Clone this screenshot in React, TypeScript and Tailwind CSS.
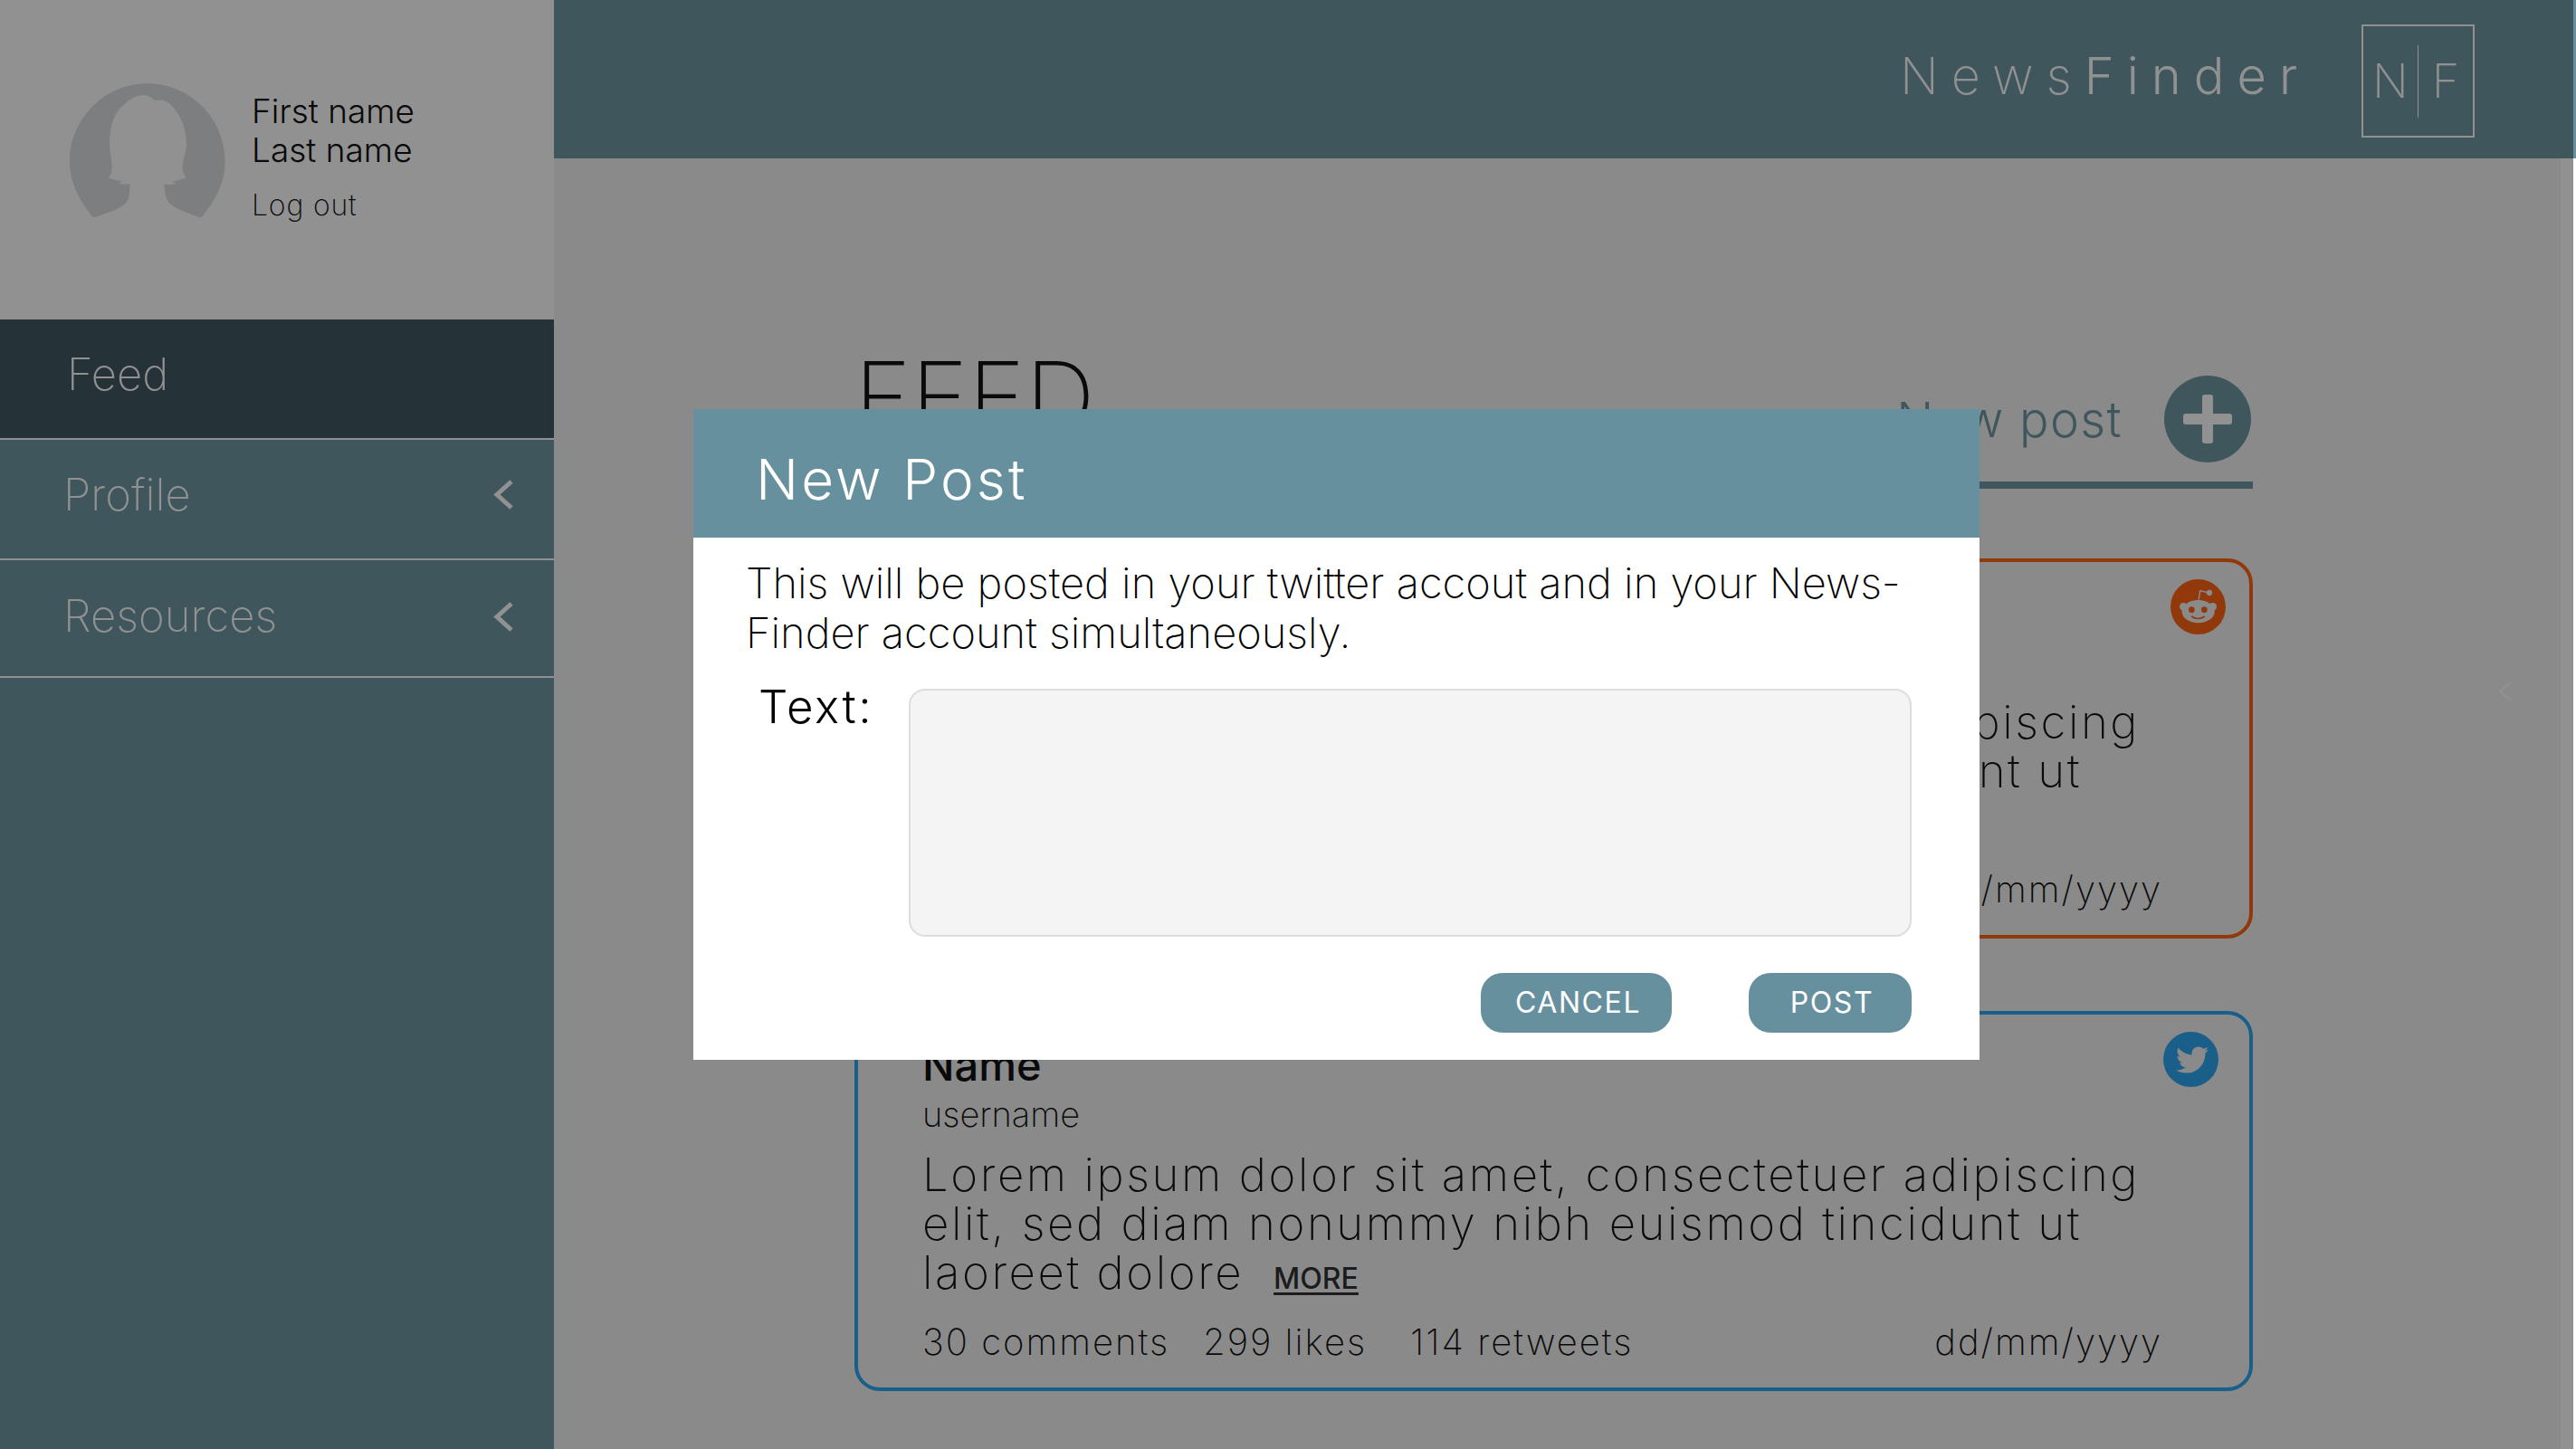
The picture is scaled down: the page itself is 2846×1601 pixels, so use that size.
import React from 'react';
import { FaTwitter } from 'react-icons/fa';

function Avatar() {
  return (
    <svg className="h-[149px] w-[172px] shrink-0 text-[#dadcdf]" viewBox="52 35 516 447" role="img" aria-label="Profile picture">
      <path
        fill="currentColor"
        d="M131 481 C92 434 52 370 52 295 C52 150 170 36 310 36 C450 36 567 150 567 295 C567 370 528 434 487 481
           C450 467 405 453 384 434 C369 420 367 392 365 369 Q384 373 403 368 L393 360 Q418 357 439 347
           C427 337 426 322 426 305 C429 283 439 262 439 233 C437 186 422 145 394 114 C376 91 355 87 334 93
           C322 78 306 74 291 75 C258 77 241 99 220 117 C193 146 185 190 184 236 C185 270 195 297 191 330
           Q188 341 179 347 Q200 357 224 360 L215 368 Q233 372 252 369 L249 407 Q247 427 228 441 C203 457 166 469 131 481 Z"
      />
    </svg>
  );
}

function Chevron({ className }: { className: string }) {
  return (
    <svg className={className} viewBox="0 0 22 33" fill="none" stroke="currentColor" aria-hidden="true">
      <path d="M20 2 L4 16.500 L20 31" strokeWidth="5" />
    </svg>
  );
}

function RedditBadge() {
  return (
    <svg className="absolute top-[19px] right-[26px] size-[61px]" viewBox="0 0 183 183" role="img" aria-label="Reddit">
      <circle cx="91.500" cy="91.500" r="91.500" fill="#ff5a02" />
      <g fill="#f2f2f2">
        <circle cx="43" cy="91" r="13" />
        <circle cx="140" cy="91" r="13" />
        <ellipse cx="92" cy="107" rx="54" ry="38" />
        <circle cx="129" cy="45" r="9.500" />
      </g>
      <path d="M93 71 L98 38 L126 45" fill="none" stroke="#f2f2f2" strokeWidth="4" />
      <circle cx="70" cy="101" r="10" fill="#ff5a02" />
      <circle cx="112" cy="101" r="10" fill="#ff5a02" />
      <path d="M69 123 Q91 138 114 123" fill="none" stroke="#ff5a02" strokeWidth="5" />
    </svg>
  );
}

function TwitterBadge() {
  return (
    <span className="absolute top-[19px] right-[34px] flex size-[61px] items-center justify-center rounded-full bg-[#1da1f2] pl-0.5 text-[#f2f2f2]">
      <FaTwitter size={36} title="Twitter" />
    </span>
  );
}

function Post({ border, badge, shares }: { border: string; badge: React.ReactNode; shares: string }) {
  return (
    <article className={`relative rounded-[28px] border-4 pt-7 pr-[96px] pb-6 pl-[71px] ${border}`}>
      {badge}
      <h2 className="text-[47px] leading-[56px] font-medium">Name</h2>
      <p className="text-[38px] leading-[52px] font-extralight">username</p>
      <p className="mt-3.5 text-[51px] leading-[54px] font-extralight tracking-wider">
        Lorem ipsum dolor sit amet, consectetuer adipiscing
        <br />
        elit, sed diam nonummy nibh euismod tincidunt ut
        <br />
        laoreet dolore{' '}
        <a href="#more" className="ml-4 text-[32px] leading-none font-medium tracking-normal text-[#222] underline underline-offset-4">
          MORE
        </a>
      </p>
      <div className="mt-6 flex justify-between text-[40px] leading-[52px] font-extralight tracking-wider">
        <ul className="flex">
          <li className="w-[310px]">30 comments</li>
          <li className="w-[229px]">299 likes</li>
          <li>{shares}</li>
        </ul>
        <time>dd/mm/yyyy</time>
      </div>
    </article>
  );
}

function Sidebar() {
  return (
    <aside className="flex w-[612px] shrink-0 flex-col bg-[#67909e]">
      <div className="flex h-[353px] items-start gap-[29px] bg-white pl-[77px]">
        <div className="pt-[92px]">
          <Avatar />
        </div>
        <div className="pt-[101px]">
          <p className="text-[37px] leading-[43px] font-light">
            First name
            <br />
            Last name
          </p>
          <button type="button" className="mt-5 text-[32px] leading-10 font-extralight tracking-wide">
            Log out
          </button>
        </div>
      </div>
      <nav className="text-[49px] font-extralight text-white">
        <a href="#feed" className="flex h-[133px] items-center border-b-2 border-white bg-[#334c57] pb-2.5 pl-[74px]">
          Feed
        </a>
        <a href="#profile" className="flex h-[133px] items-center justify-between border-b-2 border-white pr-[45px] pb-2.5 pl-[70px]">
          Profile
          <Chevron className="h-[33px] w-[22px]" />
        </a>
        <a href="#resources" className="flex h-[130px] items-center justify-between border-b-2 border-white pr-[45px] pb-1 pl-[70px]">
          Resources
          <Chevron className="h-[33px] w-[22px]" />
        </a>
      </nav>
    </aside>
  );
}

function TopBar() {
  return (
    <header className="flex h-[175px] items-center justify-end bg-[#67909e] pt-1 pr-[112px] text-white">
      <p className="mr-[57px] pb-3 text-[56px] font-extralight tracking-[0.25em]">
        News<span className="font-light">Finder</span>
      </p>
      <div className="flex size-[125px] items-center border-2 border-white text-[52px] leading-none font-extralight" aria-hidden="true">
        <span className="flex-1 text-center">N</span>
        <span className="h-20 w-px bg-white" />
        <span className="flex-1 text-center">F</span>
      </div>
    </header>
  );
}

function NewPostDialog() {
  return (
    <div className="fixed inset-y-0 right-[3px] left-0 flex items-start bg-[#151515]/47 pt-[452px] pr-[656px] pl-[766px]">
      <form role="dialog" aria-labelledby="dialog-title" className="w-full bg-white" onSubmit={(e) => e.preventDefault()}>
        <h2 id="dialog-title" className="flex h-[142px] items-center bg-[#67909e] pt-3 pl-[69px] text-[62px] font-light tracking-wider text-white">
          New Post
        </h2>
        <div className="pt-[22px] pr-[75px] pb-[30px] pl-[58px]">
          <p className="text-[47px] leading-[55px] font-extralight whitespace-nowrap">
            This will be posted in your twitter accout and in your News-
            <br />
            Finder account simultaneously.
          </p>
          <div className="mt-[35px] flex items-start">
            <label htmlFor="post-text" className="w-[180px] pl-3.5 text-[51px] leading-10 font-light tracking-wider">
              Text:
            </label>
            <textarea id="post-text" className="h-[274px] flex-1 resize-none rounded-[18px] border-2 border-[#dddddd] bg-[#f4f4f4] p-6 text-[38px] font-light" />
          </div>
          <div className="mt-10 flex justify-end gap-[85px] text-[32px] font-normal tracking-wider text-white">
            <button type="button" className="h-[66px] w-[211px] rounded-3xl bg-[#67909e] pl-1">
              CANCEL
            </button>
            <button type="submit" className="h-[66px] w-[180px] rounded-3xl bg-[#67909e] pl-1">
              POST
            </button>
          </div>
        </div>
      </form>
    </div>
  );
}

export default function App() {
  return (
    <div className="flex min-h-screen bg-[#f2f2f2] font-['Inter',sans-serif] text-black">
      <Sidebar />
      <div className="flex min-w-0 flex-1 flex-col">
        <TopBar />
        <main className="relative flex-1 border-r-[17px] border-white pt-[215px] pr-[340px] pb-16 pl-[332px]">
          <div className="flex items-start justify-between border-b-8 border-[#67909e] pb-[21px]">
            <h1 className="text-[107px] leading-24 font-extralight">FEED</h1>
            <button type="button" className="mt-[25px] mr-0.5 flex items-center gap-[46px] text-[54px] font-light tracking-wide text-[#67909e]">
              New post
              <svg className="size-24" viewBox="0 0 96 96" aria-hidden="true">
                <circle cx="48" cy="48" r="48" fill="#67909e" />
                <rect x="42" y="21" width="12" height="54" rx="3" fill="#ffffff" />
                <rect x="21" y="42" width="54" height="12" rx="3" fill="#ffffff" />
              </svg>
            </button>
          </div>
          <div className="mt-[77px] flex flex-col gap-20">
            <Post border="border-[#ff5a02]" badge={<RedditBadge />} shares="114 shares" />
            <Post border="border-[#1da1f2]" badge={<TwitterBadge />} shares="114 retweets" />
          </div>
          <button type="button" aria-label="Open panel" className="absolute top-[578px] right-[54px] text-white">
            <svg className="h-[22px] w-[15px]" viewBox="0 0 15 22" fill="none" stroke="currentColor" strokeWidth="2" aria-hidden="true">
              <path d="M14 1 L2 11 L14 21" />
            </svg>
          </button>
        </main>
      </div>
      <NewPostDialog />
    </div>
  );
}
